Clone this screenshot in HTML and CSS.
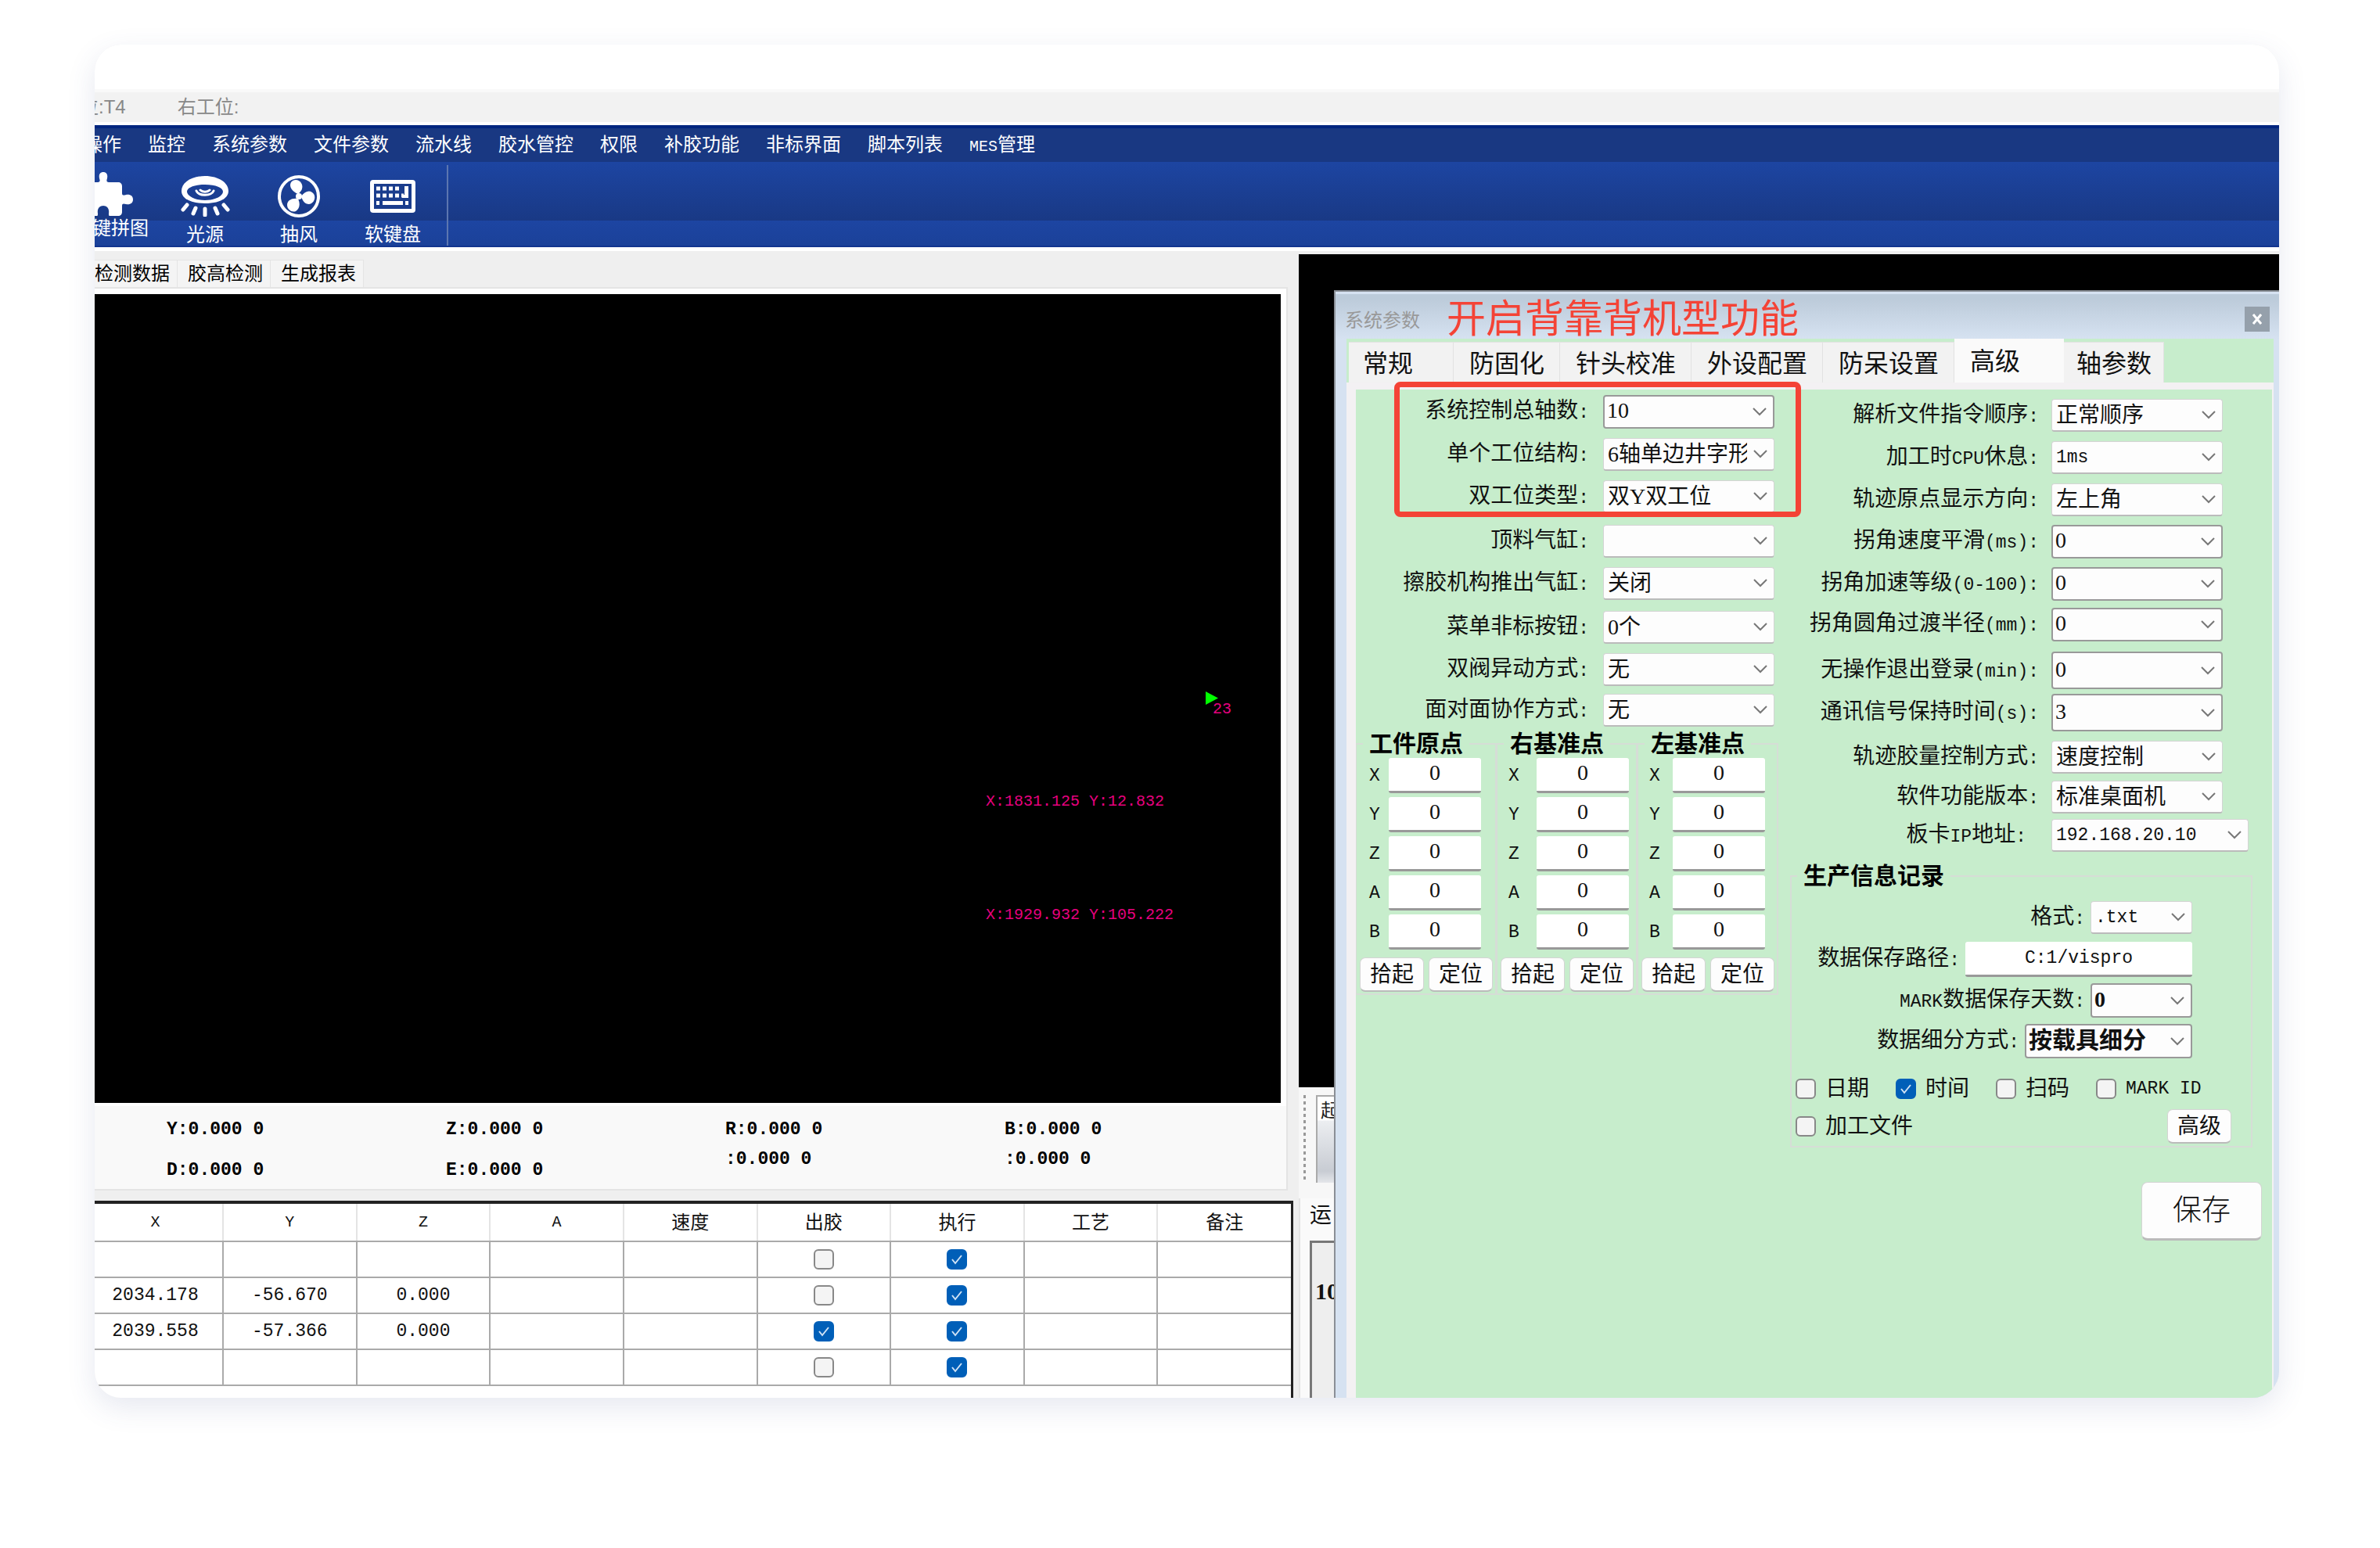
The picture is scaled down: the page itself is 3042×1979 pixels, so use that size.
FILE: index.html
```html
<!DOCTYPE html>
<html lang="zh-CN">
<head>
<meta charset="utf-8">
<meta name="viewport" content="width=device-width, initial-scale=1">
<title>系统参数</title>
<link rel="stylesheet" href="styles.css">
</head>
<body>
<main class="app">
  <div class="app-top"></div>
  <header class="titlebar"><span>位:T4</span><span>右工位:</span></header>

  <nav class="menu">
    <a href="#">操作</a><a href="#">监控</a><a href="#">系统参数</a><a href="#">文件参数</a><a href="#">流水线</a><a href="#">胶水管控</a><a href="#">权限</a><a href="#">补胶功能</a><a href="#">非标界面</a><a href="#">脚本列表</a><a href="#"><span class="half-sm">MES</span>管理</a>
  </nav>

  <div class="ribbon">
    <div class="ribbon-group">
      <button class="tool tool-high" type="button">
        <svg width="72" height="58" viewBox="0 0 72 58"><path fill="#fff" d="M4 14h20c3 0 3-2 2-5-1-5 1-8 5-8s6 3 5 8c-1 3-1 5 2 5h12c3 0 5 2 5 5v9c0 3 2 3 5 2 5-1 9 1 9 6s-4 7-9 6c-3-1-5-1-5 2v8c0 3-2 5-5 5H39c-1 0-1-1-1-3 1-6-2-10-7-10s-8 4-7 10c0 2 0 3-1 3H4z"/><circle cx="12" cy="35" r="8" fill="#1a3d8d"/></svg>
        <span>键拼图</span>
      </button>
      <button class="tool" type="button">
        <svg width="64" height="54" viewBox="0 0 64 54"><path fill="#fff" fill-rule="evenodd" d="M32 2C14 2 2 11 2 21s12 16 30 16 30-6 30-16S50 2 32 2zm0 11c14 0 23 4 23 9s-9 11-23 11S9 27 9 22s9-9 23-9z"/><path fill="none" stroke="#fff" stroke-width="3" stroke-linecap="round" d="M21 21c3 7 19 7 22 0M26 20c3 3 9 3 12 0"/><path stroke="#fff" stroke-width="5" stroke-linecap="round" d="M9 39l-5 6M20 43l-3 7M32 44v8M45 43l3 7M56 39l5 6"/></svg>
        <span>光源</span>
      </button>
      <button class="tool" type="button">
        <svg width="56" height="56" viewBox="0 0 56 56"><circle cx="28" cy="28" r="25" fill="none" stroke="#fff" stroke-width="4"/><g fill="#fff"><circle cx="28" cy="28" r="4"/><path d="M27 25c-8-3-12-10-9-15 3-4 10-4 13 1s1 10-4 14z"/><path d="M31 28c4-6 10-8 14-5 5 3 4 11-1 14s-11-1-13-9z"/><path d="M27 31c3 7 2 13-3 16-5 2-11-2-11-8s6-9 14-8z"/></g></svg>
        <span>抽风</span>
      </button>
      <button class="tool" type="button">
        <svg width="60" height="44" viewBox="0 0 60 44"><rect x="1" y="1" width="58" height="42" rx="4" fill="#fff"/><rect x="6" y="6" width="48" height="32" fill="#1a3d8d"/><path stroke="#fff" stroke-width="5" stroke-dasharray="5 3" d="M9 12h32M9 21h35"/><path fill="#fff" d="M45 9h5v15h-8v-4h3zM17 28h26v5H17zM9 28h4v5H9zM46 28h4v5h-4z"/></svg>
        <span>软键盘</span>
      </button>
    </div>
  </div>

  <div class="workspace">
    <section class="left">
      <div class="tabs"><button type="button">检测数据</button><button type="button">胶高检测</button><button type="button">生成报表</button></div>
      <div class="panel">
        <div class="canvas">
          <svg class="marker" width="16" height="17" viewBox="0 0 16 17"><path fill="#0f0" d="M0 0l16 8.500L0 17z"/></svg>
          <span class="pt pt-a">23</span>
          <span class="pt pt-b">X:1831.125 Y:12.832</span>
          <span class="pt pt-c">X:1929.932 Y:105.222</span>
        </div>
        <div class="axes">
          <div class="axis-pair"><span>Y:0.000 0</span><span>D:0.000 0</span></div>
          <div class="axis-pair"><span>Z:0.000 0</span><span>E:0.000 0</span></div>
          <div class="axis-pair near"><span>R:0.000 0</span><span>:0.000 0</span></div>
          <div class="axis-pair near"><span>B:0.000 0</span><span>:0.000 0</span></div>
        </div>
      </div>
      <div class="grid-box">
        <table>
          <thead><tr><th class="lat">X</th><th class="lat">Y</th><th class="lat">Z</th><th class="lat">A</th><th>速度</th><th>出胶</th><th>执行</th><th>工艺</th><th>备注</th></tr></thead>
          <tbody>
            <tr><td></td><td></td><td></td><td></td><td></td><td><input type="checkbox" aria-label="出胶"></td><td><input type="checkbox" aria-label="执行" checked></td><td></td><td></td></tr>
            <tr><td>2034.178</td><td>-56.670</td><td>0.000</td><td></td><td></td><td><input type="checkbox" aria-label="出胶"></td><td><input type="checkbox" aria-label="执行" checked></td><td></td><td></td></tr>
            <tr><td>2039.558</td><td>-57.366</td><td>0.000</td><td></td><td></td><td><input type="checkbox" aria-label="出胶" checked></td><td><input type="checkbox" aria-label="执行" checked></td><td></td><td></td></tr>
            <tr><td></td><td></td><td></td><td></td><td></td><td><input type="checkbox" aria-label="出胶"></td><td><input type="checkbox" aria-label="执行" checked></td><td></td><td></td></tr>
          </tbody>
        </table>
      </div>
    </section>

    <section class="right">
      <div class="view"></div>
      <div class="strip"><div class="grip"></div><button class="strip-btn" type="button">起</button></div>
      <div class="run"><div class="run-title">运</div><div class="run-box">10</div></div>
    </section>
  </div>

  <section class="dialog">
    <header class="dialog-title">
      <h1>系统参数</h1>
      <p class="note">开启背靠背机型功能</p>
      <button class="close" type="button" aria-label="关闭"><svg width="12" height="14" viewBox="0 0 12 14"><path stroke="#fff" stroke-width="3" d="M1 1l10 12M11 1L1 13"/></svg></button>
    </header>
    <div class="dialog-body">
      <div class="dtabs">
        <button class="t1" type="button">常规</button><button class="t2" type="button">防固化</button><button class="t3" type="button">针头校准</button><button class="t3" type="button">外设配置</button><button class="t3" type="button">防呆设置</button><button class="t4 on" type="button">高级</button><button class="t5" type="button">轴参数</button>
      </div>
      <div class="pane">
        <div class="col-a">
          <div class="fields fields-a">
            <div class="field"><label for="a1">系统控制总轴数<i>:</i></label><select id="a1" class="edit"><option>10</option></select></div>
            <div class="field"><label for="a2">单个工位结构<i>:</i></label><select id="a2"><option>6轴单边井字形</option></select></div>
            <div class="field"><label for="a3">双工位类型<i>:</i></label><select id="a3"><option>双Y双工位</option></select></div>
            <div class="field"><label for="a4">顶料气缸<i>:</i></label><select id="a4"><option></option></select></div>
            <div class="field"><label for="a5">擦胶机构推出气缸<i>:</i></label><select id="a5"><option>关闭</option></select></div>
            <div class="field"><label for="a6">菜单非标按钮<i>:</i></label><select id="a6"><option>0个</option></select></div>
            <div class="field"><label for="a7">双阀异动方式<i>:</i></label><select id="a7"><option>无</option></select></div>
            <div class="field"><label for="a8">面对面协作方式<i>:</i></label><select id="a8"><option>无</option></select></div>
          </div>
          <div class="origins">
            <fieldset class="origin">
              <legend>工件原点</legend>
              <div class="coords">
                <label for="p1">X</label><input id="p1" value="0"><label for="p2">Y</label><input id="p2" value="0"><label for="p3">Z</label><input id="p3" value="0"><label for="p4">A</label><input id="p4" value="0"><label for="p5">B</label><input id="p5" value="0">
              </div>
              <div class="acts"><button class="btn" type="button">拾起</button><button class="btn" type="button">定位</button></div>
            </fieldset>
            <fieldset class="origin wide">
              <legend>右基准点</legend>
              <div class="coords">
                <label for="q1">X</label><input id="q1" value="0"><label for="q2">Y</label><input id="q2" value="0"><label for="q3">Z</label><input id="q3" value="0"><label for="q4">A</label><input id="q4" value="0"><label for="q5">B</label><input id="q5" value="0">
              </div>
              <div class="acts"><button class="btn" type="button">拾起</button><button class="btn" type="button">定位</button></div>
            </fieldset>
            <fieldset class="origin mid">
              <legend>左基准点</legend>
              <div class="coords">
                <label for="r1">X</label><input id="r1" value="0"><label for="r2">Y</label><input id="r2" value="0"><label for="r3">Z</label><input id="r3" value="0"><label for="r4">A</label><input id="r4" value="0"><label for="r5">B</label><input id="r5" value="0">
              </div>
              <div class="acts"><button class="btn" type="button">拾起</button><button class="btn" type="button">定位</button></div>
            </fieldset>
          </div>
        </div>

        <div class="col-b">
          <div class="fields fields-b">
            <div class="field"><label for="b1">解析文件指令顺序<i>:</i></label><select id="b1"><option>正常顺序</option></select></div>
            <div class="field"><label for="b2">加工时<i>CPU</i>休息<i>:</i></label><select id="b2" class="lat"><option>1ms</option></select></div>
            <div class="field"><label for="b3">轨迹原点显示方向<i>:</i></label><select id="b3"><option>左上角</option></select></div>
            <div class="field"><label for="b4">拐角速度平滑<i>(ms):</i></label><select id="b4" class="edit"><option>0</option></select></div>
            <div class="field"><label for="b5">拐角加速等级<i>(0-100):</i></label><select id="b5" class="edit"><option>0</option></select></div>
            <div class="field"><label for="b6">拐角圆角过渡半径<i>(mm):</i></label><select id="b6" class="edit"><option>0</option></select></div>
            <div class="field"><label for="b7">无操作退出登录<i>(min):</i></label><select id="b7" class="edit tall"><option>0</option></select></div>
            <div class="field"><label for="b8">通讯信号保持时间<i>(s):</i></label><select id="b8" class="edit tall"><option>3</option></select></div>
            <div class="field"><label for="b9">轨迹胶量控制方式<i>:</i></label><select id="b9"><option>速度控制</option></select></div>
            <div class="field"><label for="b10">软件功能版本<i>:</i></label><select id="b10"><option>标准桌面机</option></select></div>
            <div class="field ip"><label for="b11">板卡<i>IP</i>地址<i>:</i></label><select id="b11" class="lat"><option>192.168.20.10</option></select></div>
          </div>

          <fieldset class="record">
            <legend>生产信息记录</legend>
            <div class="record-fields">
              <div class="rfield"><label for="c1">格式<i>:</i></label><select id="c1" class="lat short"><option>.txt</option></select></div>
              <div class="rfield"><label for="c2">数据保存路径<i>:</i></label><input id="c2" class="path" value="C:1/vispro"></div>
              <div class="rfield"><label for="c3"><i>MARK</i>数据保存天数<i>:</i></label><select id="c3" class="edit short bold"><option>0</option></select></div>
              <div class="rfield"><label for="c4">数据细分方式<i>:</i></label><select id="c4" class="edit bold"><option>按载具细分</option></select></div>
            </div>
            <div class="checks">
              <label><input type="checkbox">日期</label>
              <label><input type="checkbox" checked>时间</label>
              <label><input type="checkbox">扫码</label>
              <label><input type="checkbox"><i>MARK ID</i></label>
            </div>
            <div class="checks-end">
              <label><input type="checkbox">加工文件</label>
              <button class="btn" type="button">高级</button>
            </div>
          </fieldset>
          <button class="save" type="button">保存</button>
        </div>
      </div>
    </div>
    <div class="frame"></div>
  </section>
</main>
</body>
</html>
```

FILE: styles.css
```css
* { box-sizing: border-box; }

body {
  margin: 0;
  padding: 57px 129px 192px 121px;
  background: #fff;
  color: #111;
  font-family: "Liberation Sans", "Noto Sans CJK SC", sans-serif;
  font-size: 24px;
  line-height: 32px;
}

button, input, select {
  margin: 0;
  padding: 0;
  border: 0;
  color: inherit;
  font: inherit;
}

select, input { appearance: none; border-radius: 0; }

label i {
  font: 23px/32px "Liberation Mono", monospace;
}

.half-sm { font: 20px/32px "Liberation Mono", monospace; }

.app {
  position: relative;
  display: flex;
  flex-direction: column;
  overflow: clip;
  background: #efefef;
  border-radius: 34px;
  box-shadow: 0 12px 36px rgba(60, 80, 140, 0.13);
}

.app-top { height: 57px; background: #fff; }

.titlebar {
  display: flex;
  gap: 66px;
  height: 46px;
  padding-top: 4px;
  margin-left: -19px;
  background: #f2f2f2;
  border-top: 4px solid #f9f9f9;
  border-bottom: 4px solid #fff;
  color: #888;
  line-height: 30px;
}

.menu {
  display: flex;
  gap: 34px;
  height: 47px;
  padding-top: 5px;
  margin-left: -14px;
  background: #193882;
  border-top: 4px solid #00257f;
  line-height: 32px;
}

.menu a { color: #fff; text-decoration: none; white-space: nowrap; }

.ribbon {
  display: flex;
  height: 109px;
  padding-top: 4px;
  background: linear-gradient(#1d45a2, #193985 75px, #1d45a2 75px, #1b4199);
  border-bottom: 2px solid #12358f;
}

.ribbon-group {
  display: flex;
  margin-left: -39px;
  padding-right: 9px;
  border-right: 2px solid #5c76b0;
}

.tool {
  display: flex;
  flex-direction: column;
  align-items: center;
  justify-content: space-between;
  width: 120px;
  padding-top: 12px;
  background: none;
  color: #fff;
  line-height: 28px;
}

.tool svg { flex: none; }
.tool:nth-child(n+4) { padding-top: 18px; }
.tool-high { padding: 8px 10px 8px 0; white-space: nowrap; }
.tool-high span { padding-left: 34px; }

.workspace {
  display: grid;
  grid-template-columns: 1539fr 1253fr;
  border-top: 5px solid #fff;
}

.left { display: flex; flex-direction: column; min-width: 0; }

.tabs { display: flex; padding-top: 11px; }

.tabs button {
  height: 35px;
  padding: 0 9px 0 13px;
  background: #f4f4f4;
  border: solid #e4e4e4;
  border-width: 1px 1px 0 0;
  color: #000;
  line-height: 34px;
}

.tabs button:first-child { padding-left: 0; }

.panel {
  margin-right: 14px;
  padding: 7px 7px 0 0;
  background: #fff;
  border: solid #e4e4e4;
  border-width: 2px 2px 2px 0;
}

.canvas {
  position: relative;
  height: 1034px;
  background: #000;
}

.marker { position: absolute; right: 80px; top: 508px; }

.pt {
  position: absolute;
  color: #e6007e;
  font: 20px/24px "Liberation Mono", monospace;
  white-space: pre;
}

.pt-a { right: 63px; top: 519px; }
.pt-b { left: 1139px; top: 637px; }
.pt-c { left: 1139px; top: 782px; }

.axes {
  display: grid;
  grid-template-columns: repeat(4, 357px);
  height: 110px;
  margin-right: -7px;
  padding: 16px 0 0 92px;
  background: #f9f9f9;
  border-top: 4px solid #fff;
}

.axis-pair {
  display: flex;
  flex-direction: column;
  gap: 24px;
  color: #000;
  font: bold 23px/28px "Liberation Mono", monospace;
}

.near { gap: 10px; }

.grid-box {
  flex: 1;
  min-height: 252px;
  margin: 13px 7px 0 0;
  background: #fff;
  border: solid #222;
  border-width: 4px 3px 0 0;
}

table {
  width: 100%;
  border-collapse: collapse;
  table-layout: fixed;
}

th, td {
  height: 46px;
  padding: 0;
  border: 2px solid #aaa;
  border-left: 0;
  text-align: center;
  font: 23px/28px "Liberation Mono", monospace;
}

th {
  height: 48px;
  border-color: #e4e4e4;
  border-top: 0;
  border-bottom-color: #aaa;
  font: 24px/32px "Liberation Sans", "Noto Sans CJK SC", sans-serif;
}

th.lat { font: 20px/32px "Liberation Mono", monospace; }
td:last-child, th:last-child { border-right: 0; }
th:first-child, td:first-child { padding-right: 8px; width: 164px; }

input[type="checkbox"] {
  display: block;
  flex: none;
  width: 26px;
  height: 26px;
  background: #f4f4f4;
  border: 2px solid #888;
  border-radius: 6px;
}

td input[type="checkbox"] { margin: 0 auto; }

input[type="checkbox"]:checked {
  background: #005fb8 url("data:image/svg+xml,%3Csvg xmlns='http://www.w3.org/2000/svg' viewBox='0 0 26 26'%3E%3Cpath d='M7 13l4 5 8-10' fill='none' stroke='%23cfe2f5' stroke-width='2'/%3E%3C/svg%3E") center / 26px;
  border-color: #005fb8;
}

.right {
  display: flex;
  flex-direction: column;
  padding-top: 4px;
}

.view { height: 1065px; background: #000; }

.strip {
  display: flex;
  gap: 13px;
  height: 142px;
  padding: 10px 0 20px 6px;
  background: #f7f7f7;
}

.grip { width: 3px; background: repeating-linear-gradient(#999 0 4px, #f7f7f7 4px 8px); }

.strip-btn {
  display: flex;
  align-items: flex-start;
  width: 120px;
  padding-left: 4px;
  background: linear-gradient(#fff 30px, #eceef1 31px, #c8ccd3 95px, #e4e6ea);
  border: solid #aaa;
  border-width: 2px 0 0 2px;
  color: #222;
  line-height: 36px;
}

.run {
  display: flex;
  flex: 1;
  flex-direction: column;
  background: #fafafa;
  border-left: 2px solid #e4e4e4;
}

.run-title { height: 54px; padding-left: 12px; font-size: 28px; line-height: 44px; }

.run-box {
  flex: 1;
  margin-left: 12px;
  padding: 44px 0 0 4px;
  background: #eee;
  border: solid #777;
  border-width: 3px 0 0 3px;
  font: bold 30px/36px "Liberation Serif", serif;
}

/* Floating parameter window */
.dialog {
  position: absolute;
  top: 314px;
  right: 0;
  bottom: 0;
  display: flex;
  flex-direction: column;
  width: 1208px;
  padding: 0 7px 0 14px;
  background: #d6e2f1;
  border: solid #8a8f96;
  border-width: 2px 0 0 2px;
}

.dialog-title {
  display: flex;
  align-items: center;
  flex: none;
  height: 60px;
  margin: 0 -7px 0 -14px;
  padding: 10px 12px 0 12px;
  background: linear-gradient(#bccbda 6px, #d6e2f1);
  border-top: 3px solid #d6e2f1;
}

.dialog-title h1 {
  margin: 0;
  color: #999;
  font-size: 24px;
  font-weight: 400;
}

.note {
  margin: 0 0 4px 34px;
  color: #f44336;
  font-size: 50px;
  line-height: 50px;
}

.close {
  display: flex;
  align-items: center;
  justify-content: center;
  width: 32px;
  height: 32px;
  margin: 0 0 3px auto;
  background: #95a0ab;
}

.dialog-body {
  display: flex;
  flex: 1;
  flex-direction: column;
  background: #c7edcc;
}

.dtabs {
  display: flex;
  align-items: flex-end;
  height: 56px;
  padding-left: 3px;
}

.dtabs button {
  height: 52px;
  padding: 0 0 0 20px;
  background: #f2f2f2;
  border: solid #e2e2e2;
  border-width: 1px 1px 0 0;
  font-size: 32px;
  line-height: 54px;
  text-align: left;
  white-space: nowrap;
}

.dtabs .t1 { width: 134px; padding-left: 18px; }
.dtabs .t2 { width: 136px; }
.dtabs .t3 { width: 168px; }
.dtabs .t4 { width: 140px; }
.dtabs .t5 { width: 128px; padding-left: 16px; }
.dtabs .on { height: 56px; background: #fafafa; border-color: #fafafa; }

.pane {
  display: flex;
  flex: 1;
  gap: 15px;
  border: solid #f3f1f3;
  border-width: 9px 2px 0 12px;
}

.col-a { width: 540px; padding-top: 7px; }
.col-b { display: flex; flex-direction: column; width: 603px; padding-top: 12px; }

.fields { display: grid; align-items: start; font-size: 28px; }
.fields-a { grid-template-rows: 55px 54px 57px 54px 56px 54px 52px 49px; padding-right: 5px; }
.fields-b { grid-template-rows: 54px 54px 53px 54px 52px 56px 54px 60px 51px 49px 58px; }

.field { display: flex; align-items: center; }
.field label { flex: 1; text-align: right; white-space: nowrap; padding-right: 18px; }
.fields-b .field label { flex: 0 0 334px; padding-right: 16px; }
.fields-b .ip label { padding-right: 32px; }

select {
  width: 219px;
  height: 42px;
  padding: 0 34px 0 5px;
  background: #fdfdfd url("data:image/svg+xml,%3Csvg xmlns='http://www.w3.org/2000/svg' width='18' height='11'%3E%3Cpath d='M1 1l8 8 8-8' fill='none' stroke='%23777' stroke-width='2'/%3E%3C/svg%3E") no-repeat right 8px center;
  border: 1px solid #d4d4d4;
  border-bottom: 2px solid #bbb;
  border-radius: 4px;
  font: 28px/36px "Liberation Serif", "Noto Sans CJK SC", sans-serif;
}

select.edit { height: 43px; padding: 0 34px 3px 3px; border: 2px solid #999; }
select.tall { height: 48px; }
select.lat { font: 23px/36px "Liberation Mono", monospace; }
select.short { width: 130px; }
select.bold { font-weight: 700; }
.ip select { width: 252px; }

.origins { display: flex; }

fieldset {
  min-width: 0;
  margin: 0;
  padding: 0;
  border: 2px solid #d6ddd6;
}

legend {
  margin-left: 8px;
  padding: 0 8px;
  color: #000;
  font-size: 30px;
  font-weight: 700;
  line-height: 30px;
}

.origin { width: 180px; border-left-width: 1px; }

.coords {
  display: grid;
  grid-template-columns: 1fr 118px;
  gap: 5px 0;
  align-items: center;
  padding: 3px 18px 0 16px;
}

.wide .coords { padding: 3px 9px 0 14px; }
.mid .coords { padding: 3px 15px 0 14px; }

.coords label { font: 23px/32px "Liberation Mono", monospace; }

.coords input, .path {
  width: 118px;
  height: 45px;
  padding-bottom: 5px;
  background: #fff;
  border-bottom: 3px solid #999;
  border-radius: 3px;
  font: 28px/36px "Liberation Serif", serif;
  text-align: center;
}

.acts { display: flex; gap: 6px; padding: 10px 0 2px 4px; }

.btn {
  width: 82px;
  height: 44px;
  background: #fdfdfd;
  border: 1px solid #d4d4d4;
  border-bottom: 2px solid #bbb;
  border-radius: 7px;
  font-size: 28px;
  line-height: 38px;
}

.record { margin-right: 12px; font-size: 28px; }
.record legend { margin-left: 7px; }

.record-fields {
  display: grid;
  grid-template-rows: 52px 53px 52px 70px;
  align-items: start;
  padding: 17px 75px 0 0;
}

.rfield { display: flex; align-items: center; justify-content: flex-end; gap: 7px; }
.rfield select.edit { height: 44px; }
.rfield select.edit:not(.short) { width: 214px; font-size: 30px; }
.record .path { width: 290px; height: 45px; padding-bottom: 0; font: 23px/36px "Liberation Mono", monospace; }

.checks { display: grid; grid-template-columns: repeat(4, 128px); padding-left: 5px; }
.checks label, .checks-end label { display: flex; align-items: center; gap: 12px; height: 26px; white-space: nowrap; }

.checks-end {
  display: flex;
  align-items: center;
  justify-content: space-between;
  padding: 13px 25px 3px 5px;
}

.save {
  align-self: flex-end;
  width: 154px;
  height: 75px;
  margin-top: 44px;
  background: #fdfdfd;
  border: 1px solid #d4d4d4;
  border-bottom: 3px solid #bbb;
  border-radius: 8px;
  font-size: 37px;
  font-weight: 300;
  line-height: 60px;
}

/* Callout round the first three settings */
.frame {
  position: absolute;
  top: 115px;
  left: 75px;
  width: 520px;
  height: 173px;
  border: 7px solid #f44336;
  border-radius: 8px;
}
```
